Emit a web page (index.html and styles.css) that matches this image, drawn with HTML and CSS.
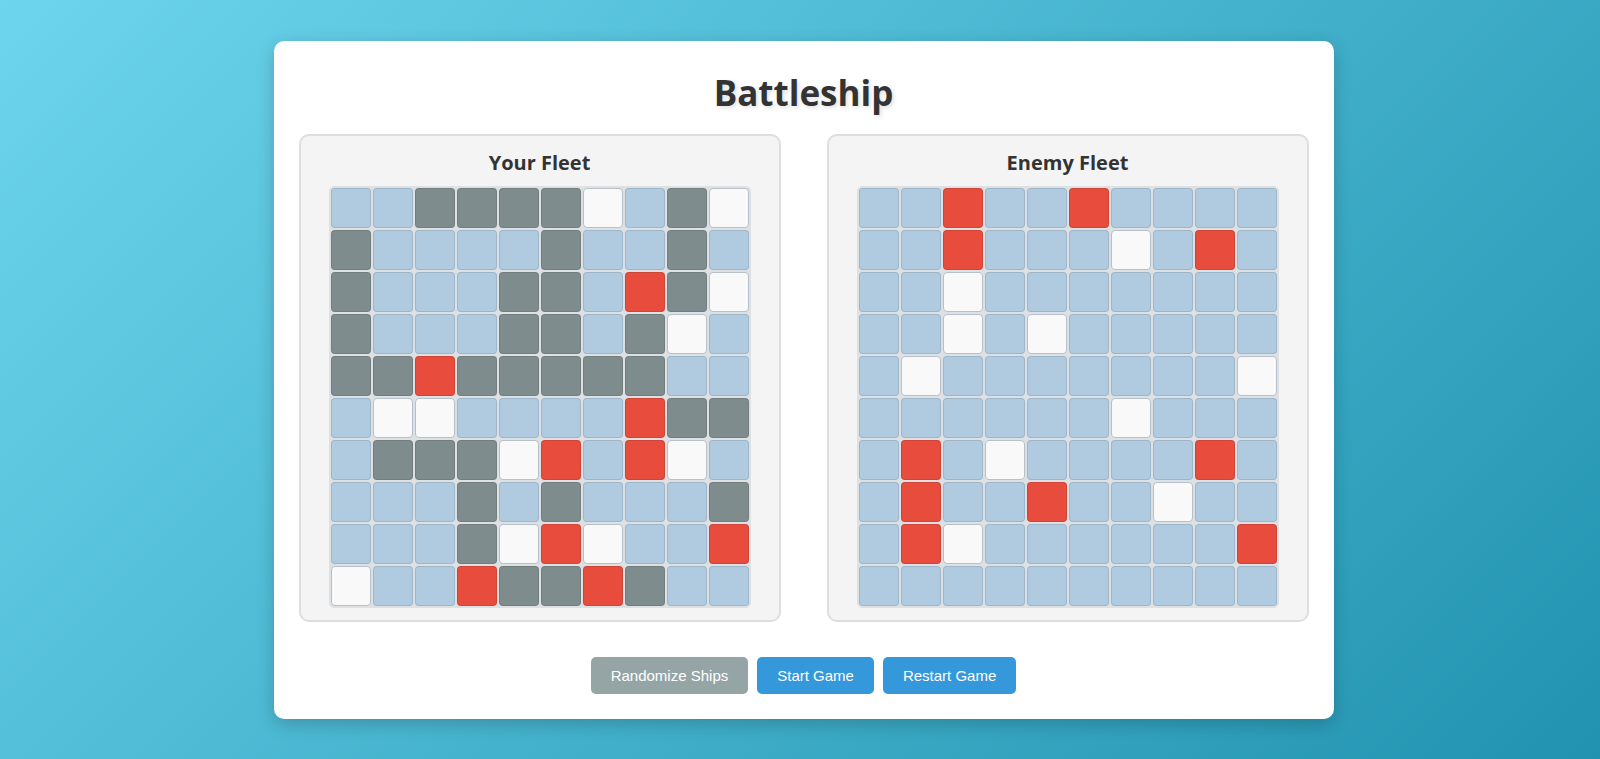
FILE: index.html
```html
<!DOCTYPE html>
<html lang="en">
<head>
<meta charset="utf-8">
<title>Battleship</title>
<link rel="stylesheet" href="styles.css">
</head>
<body>
<div class="card">
  <h1 class="title">Battleship</h1>
  <div class="boards">
    <section class="panel">
      <h2 class="panel-title">Your Fleet</h2>
      <div class="grid">
        <div class="cell"></div><div class="cell"></div><div class="cell ship"></div><div class="cell ship"></div><div class="cell ship"></div><div class="cell ship"></div><div class="cell miss"></div><div class="cell"></div><div class="cell ship"></div><div class="cell miss"></div>
        <div class="cell ship"></div><div class="cell"></div><div class="cell"></div><div class="cell"></div><div class="cell"></div><div class="cell ship"></div><div class="cell"></div><div class="cell"></div><div class="cell ship"></div><div class="cell"></div>
        <div class="cell ship"></div><div class="cell"></div><div class="cell"></div><div class="cell"></div><div class="cell ship"></div><div class="cell ship"></div><div class="cell"></div><div class="cell hit"></div><div class="cell ship"></div><div class="cell miss"></div>
        <div class="cell ship"></div><div class="cell"></div><div class="cell"></div><div class="cell"></div><div class="cell ship"></div><div class="cell ship"></div><div class="cell"></div><div class="cell ship"></div><div class="cell miss"></div><div class="cell"></div>
        <div class="cell ship"></div><div class="cell ship"></div><div class="cell hit"></div><div class="cell ship"></div><div class="cell ship"></div><div class="cell ship"></div><div class="cell ship"></div><div class="cell ship"></div><div class="cell"></div><div class="cell"></div>
        <div class="cell"></div><div class="cell miss"></div><div class="cell miss"></div><div class="cell"></div><div class="cell"></div><div class="cell"></div><div class="cell"></div><div class="cell hit"></div><div class="cell ship"></div><div class="cell ship"></div>
        <div class="cell"></div><div class="cell ship"></div><div class="cell ship"></div><div class="cell ship"></div><div class="cell miss"></div><div class="cell hit"></div><div class="cell"></div><div class="cell hit"></div><div class="cell miss"></div><div class="cell"></div>
        <div class="cell"></div><div class="cell"></div><div class="cell"></div><div class="cell ship"></div><div class="cell"></div><div class="cell ship"></div><div class="cell"></div><div class="cell"></div><div class="cell"></div><div class="cell ship"></div>
        <div class="cell"></div><div class="cell"></div><div class="cell"></div><div class="cell ship"></div><div class="cell miss"></div><div class="cell hit"></div><div class="cell miss"></div><div class="cell"></div><div class="cell"></div><div class="cell hit"></div>
        <div class="cell miss"></div><div class="cell"></div><div class="cell"></div><div class="cell hit"></div><div class="cell ship"></div><div class="cell ship"></div><div class="cell hit"></div><div class="cell ship"></div><div class="cell"></div><div class="cell"></div>
      </div>
    </section>
    <section class="panel">
      <h2 class="panel-title">Enemy Fleet</h2>
      <div class="grid">
        <div class="cell"></div><div class="cell"></div><div class="cell hit"></div><div class="cell"></div><div class="cell"></div><div class="cell hit"></div><div class="cell"></div><div class="cell"></div><div class="cell"></div><div class="cell"></div>
        <div class="cell"></div><div class="cell"></div><div class="cell hit"></div><div class="cell"></div><div class="cell"></div><div class="cell"></div><div class="cell miss"></div><div class="cell"></div><div class="cell hit"></div><div class="cell"></div>
        <div class="cell"></div><div class="cell"></div><div class="cell miss"></div><div class="cell"></div><div class="cell"></div><div class="cell"></div><div class="cell"></div><div class="cell"></div><div class="cell"></div><div class="cell"></div>
        <div class="cell"></div><div class="cell"></div><div class="cell miss"></div><div class="cell"></div><div class="cell miss"></div><div class="cell"></div><div class="cell"></div><div class="cell"></div><div class="cell"></div><div class="cell"></div>
        <div class="cell"></div><div class="cell miss"></div><div class="cell"></div><div class="cell"></div><div class="cell"></div><div class="cell"></div><div class="cell"></div><div class="cell"></div><div class="cell"></div><div class="cell miss"></div>
        <div class="cell"></div><div class="cell"></div><div class="cell"></div><div class="cell"></div><div class="cell"></div><div class="cell"></div><div class="cell miss"></div><div class="cell"></div><div class="cell"></div><div class="cell"></div>
        <div class="cell"></div><div class="cell hit"></div><div class="cell"></div><div class="cell miss"></div><div class="cell"></div><div class="cell"></div><div class="cell"></div><div class="cell"></div><div class="cell hit"></div><div class="cell"></div>
        <div class="cell"></div><div class="cell hit"></div><div class="cell"></div><div class="cell"></div><div class="cell hit"></div><div class="cell"></div><div class="cell"></div><div class="cell miss"></div><div class="cell"></div><div class="cell"></div>
        <div class="cell"></div><div class="cell hit"></div><div class="cell miss"></div><div class="cell"></div><div class="cell"></div><div class="cell"></div><div class="cell"></div><div class="cell"></div><div class="cell"></div><div class="cell hit"></div>
        <div class="cell"></div><div class="cell"></div><div class="cell"></div><div class="cell"></div><div class="cell"></div><div class="cell"></div><div class="cell"></div><div class="cell"></div><div class="cell"></div><div class="cell"></div>
      </div>
    </section>
  </div>
  <div class="controls">
    <button class="btn btn-gray">Randomize Ships</button>
    <button class="btn btn-blue">Start Game</button>
    <button class="btn btn-blue">Restart Game</button>
  </div>
</div>
</body>
</html>
```
FILE: styles.css
```css
* { box-sizing: border-box; }

html, body { height: 100%; }

body {
  margin: 0;
  padding-left: 7px;
  display: flex;
  align-items: center;
  justify-content: center;
  background: linear-gradient(135deg, #6dd5ed 0%, #2193b0 100%);
  font-family: "Open Sans", "Noto Sans", sans-serif;
  color: #333;
}

.card {
  width: 1060px;
  padding: 25px;
  background: #fff;
  border-radius: 10px;
  box-shadow: 0 5px 18px rgba(0, 0, 0, 0.2);
}

.title {
  margin: 3px 0 17px;
  font-size: 35px;
  line-height: 48px;
  font-weight: 700;
  text-align: center;
  color: #333;
  text-shadow: 2px 2px 4px rgba(0, 0, 0, 0.12);
}

.boards {
  display: flex;
  gap: 46px;
}

.panel {
  flex: 1;
  background: #f4f4f4;
  border: 2px solid #dedede;
  border-radius: 10px;
  padding: 13px 15px 12px;
  display: flex;
  flex-direction: column;
  align-items: center;
}

.panel-title {
  margin: 0 0 10px;
  font-size: 20px;
  line-height: 27px;
  font-weight: 700;
  color: #333;
}

.grid {
  display: grid;
  grid-template-columns: repeat(10, 40px);
  grid-auto-rows: 40px;
  gap: 2px;
  padding: 2px;
  background: #dde1e4;
  border-radius: 5px;
}

.cell {
  background: #b0cbe0;
  border: 1px solid rgba(0, 0, 0, 0.1);
  border-radius: 4px;
}

.cell.ship { background: #7f8c8d; }
.cell.hit { background: #e74c3c; }
.cell.miss { background: #f9f9f9; border-color: #b5c0ca; }

.controls {
  display: flex;
  justify-content: center;
  gap: 9px;
  margin-top: 35px;
}

.btn {
  padding: 10px 20px;
  border: none;
  border-radius: 5px;
  font-family: "Liberation Sans", Arial, sans-serif;
  font-size: 15px;
  line-height: 17px;
  color: #fff;
}

.btn-gray { background: #95a5a6; }
.btn-blue { background: #3498db; }
```
